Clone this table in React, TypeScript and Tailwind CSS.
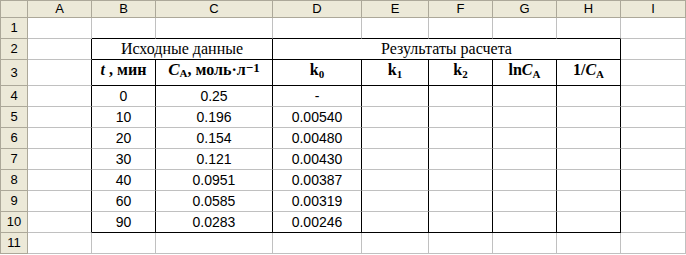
import React from "react";

type Edge = "gray" | "black";

function Cell({
  right = "gray",
  bottom = "gray",
  span = 1,
  className = "",
  children,
}: {
  right?: Edge;
  bottom?: Edge;
  span?: number;
  className?: string;
  children?: React.ReactNode;
}) {
  const r = right === "black" ? "border-r-black" : "border-r-[#c0c0c0]";
  const b = bottom === "black" ? "border-b-black" : "border-b-[#c0c0c0]";
  const s = span === 2 ? "col-span-2" : span === 5 ? "col-span-5" : "";
  return (
    <div className={`border-r border-b ${r} ${b} ${s} bg-white flex items-center justify-center ${className}`}>
      {children}
    </div>
  );
}

function RowHead({ n }: { n: number }) {
  return (
    <div className="bg-[#ece9d8] border-l border-r border-b border-[#aca899] flex items-center justify-center text-[13px] text-black font-['Liberation_Sans',Arial,sans-serif]">
      {n}
    </div>
  );
}

const letters = ["A", "B", "C", "D", "E", "F", "G", "H", "I"];

const rows: [string, string, string][] = [
  ["0", "0.25", "-"],
  ["10", "0.196", "0.00540"],
  ["20", "0.154", "0.00480"],
  ["30", "0.121", "0.00430"],
  ["40", "0.0951", "0.00387"],
  ["60", "0.0585", "0.00319"],
  ["90", "0.0283", "0.00246"],
];

function Sub({ children }: { children: React.ReactNode }) {
  return <sub className="not-italic font-bold text-[11px]">{children}</sub>;
}

const headText =
  "items-end pb-[3px] text-[16px] font-bold text-black font-['Liberation_Serif','Times_New_Roman',serif]";
const numText = "text-[14px] text-black font-['Liberation_Sans',Arial,sans-serif]";

export default function App() {
  const emptyRow = (topOfTable: boolean) =>
    letters.map((l, i) => (
      <Cell key={l} bottom={topOfTable && i >= 1 && i <= 7 ? "black" : "gray"} />
    ));

  return (
    <div className="w-[686px] h-[255px] bg-white overflow-hidden">
      <div className="grid grid-cols-[28px_64px_64px_117px_89px_67px_64px_64px_64px_65px] grid-rows-[18px_21px_21px_26px_21px_21px_21px_21px_21px_21px_21px_21px]">
        {/* column headings */}
        <div className="bg-[#ece9d8] border-t border-l border-r border-b border-[#aca899]" />
        {letters.map((l) => (
          <div
            key={l}
            className="bg-[#ece9d8] border-t border-r border-b border-[#aca899] flex items-center justify-center text-[13px] text-black font-['Liberation_Sans',Arial,sans-serif]"
          >
            {l}
          </div>
        ))}

        {/* row 1 */}
        <RowHead n={1} />
        {emptyRow(true)}

        {/* row 2: merged titles */}
        <RowHead n={2} />
        <Cell right="black" />
        <Cell
          span={2}
          right="black"
          bottom="black"
          className="text-[16px] text-black font-['Liberation_Serif','Times_New_Roman',serif]"
        >
          Исходные данные
        </Cell>
        <Cell
          span={5}
          right="black"
          bottom="black"
          className="text-[16px] text-black font-['Liberation_Serif','Times_New_Roman',serif]"
        >
          Результаты расчета
        </Cell>
        <Cell />

        {/* row 3: column titles */}
        <RowHead n={3} />
        <Cell right="black" />
        <Cell right="black" bottom="black" className={headText}>
          <span>
            <i>t</i> , мин
          </span>
        </Cell>
        <Cell right="black" bottom="black" className={headText}>
          <span>
            <i className="text-[17px]">C</i>
            <Sub>A</Sub>, моль·л
            <sup className="relative top-[-3px] text-[13px]">−1</sup>
          </span>
        </Cell>
        <Cell right="black" bottom="black" className={headText}>
          <span>
            k<Sub>0</Sub>
          </span>
        </Cell>
        <Cell right="black" bottom="black" className={headText}>
          <span>
            k<Sub>1</Sub>
          </span>
        </Cell>
        <Cell right="black" bottom="black" className={headText}>
          <span>
            k<Sub>2</Sub>
          </span>
        </Cell>
        <Cell right="black" bottom="black" className={headText}>
          <span>
            ln<i>C</i>
            <Sub>A</Sub>
          </span>
        </Cell>
        <Cell right="black" bottom="black" className={headText}>
          <span>
            1/<i>C</i>
            <Sub>A</Sub>
          </span>
        </Cell>
        <Cell />

        {/* rows 4-10: data */}
        {rows.map(([t, c, k], idx) => {
          const bottom: Edge = idx === rows.length - 1 ? "black" : "gray";
          return (
            <React.Fragment key={t}>
              <RowHead n={idx + 4} />
              <Cell right="black" />
              <Cell right="black" bottom={bottom} className={numText}>
                {t}
              </Cell>
              <Cell right="black" bottom={bottom} className={numText}>
                {c}
              </Cell>
              <Cell right="black" bottom={bottom} className={numText}>
                {k}
              </Cell>
              <Cell right="black" bottom={bottom} />
              <Cell right="black" bottom={bottom} />
              <Cell right="black" bottom={bottom} />
              <Cell right="black" bottom={bottom} />
              <Cell />
            </React.Fragment>
          );
        })}

        {/* row 11 */}
        <RowHead n={11} />
        {emptyRow(false)}
      </div>
    </div>
  );
}
